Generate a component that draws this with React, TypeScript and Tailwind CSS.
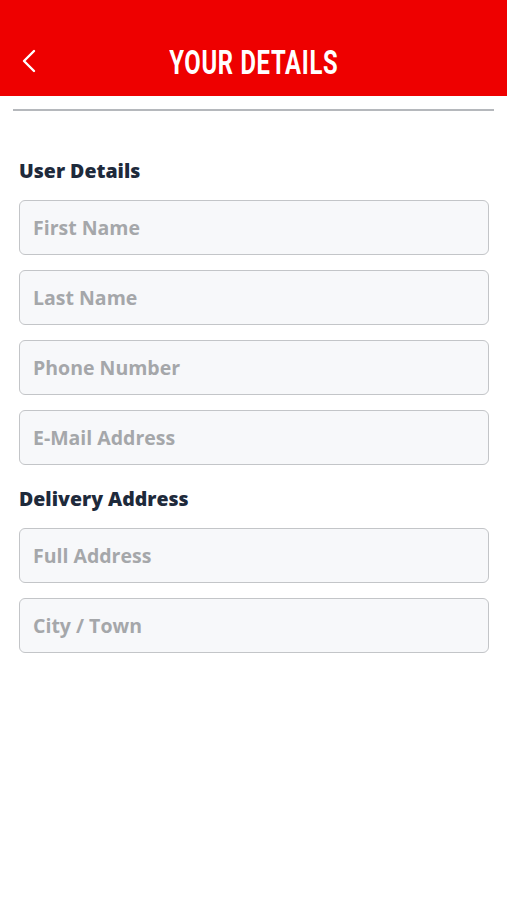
import React from "react";

const Field = ({ label }: { label: string }) => (
  <div className="h-[55px] w-full rounded-[6px] border-[1.5px] border-[#c3c5c8] bg-[#f7f8fa] flex items-center px-[13px]">
    <span className="text-[19.5px] font-bold text-[#a5a7aa]" style={{ fontFamily: '"Open Sans", sans-serif' }}>{label}</span>
  </div>
);

export default function App() {
  return (
    <div className="w-[507px] h-[900px] bg-white" style={{ fontFamily: '"Open Sans", sans-serif' }}>
      <div className="h-[96px] bg-[#ee0000] relative flex items-center justify-center pt-[28px]">
        <svg className="absolute left-[20px] top-[49px]" width="18" height="24" viewBox="0 0 18 24" fill="none">
          <path d="M14 2 L4 12 L14 22" stroke="white" strokeWidth="2.4" strokeLinecap="round" strokeLinejoin="round" />
        </svg>
        <span
          className="text-white text-[34px] leading-[40px] font-bold tracking-[1px] scale-x-[0.7] whitespace-nowrap"
          style={{ fontFamily: 'Roboto, sans-serif' }}
        >
          YOUR DETAILS
        </span>
      </div>
      <div className="mx-[13px] mt-[13px] h-[2px] bg-[#b5b8bc]" />
      <div className="pl-[19px] pr-[18px] pt-[48px] flex flex-col">
        <div className="text-[19.5px] leading-[24px] font-extrabold text-[#1e2a3b] mb-[17px]">User Details</div>
        <div className="flex flex-col gap-[15px]">
          <Field label="First Name" />
          <Field label="Last Name" />
          <Field label="Phone Number" />
          <Field label="E-Mail Address" />
        </div>
        <div className="text-[19.5px] leading-[24px] font-extrabold text-[#1e2a3b] mt-[22px] mb-[17px]">Delivery Address</div>
        <div className="flex flex-col gap-[15px]">
          <Field label="Full Address" />
          <Field label="City / Town" />
        </div>
      </div>
    </div>
  );
}
